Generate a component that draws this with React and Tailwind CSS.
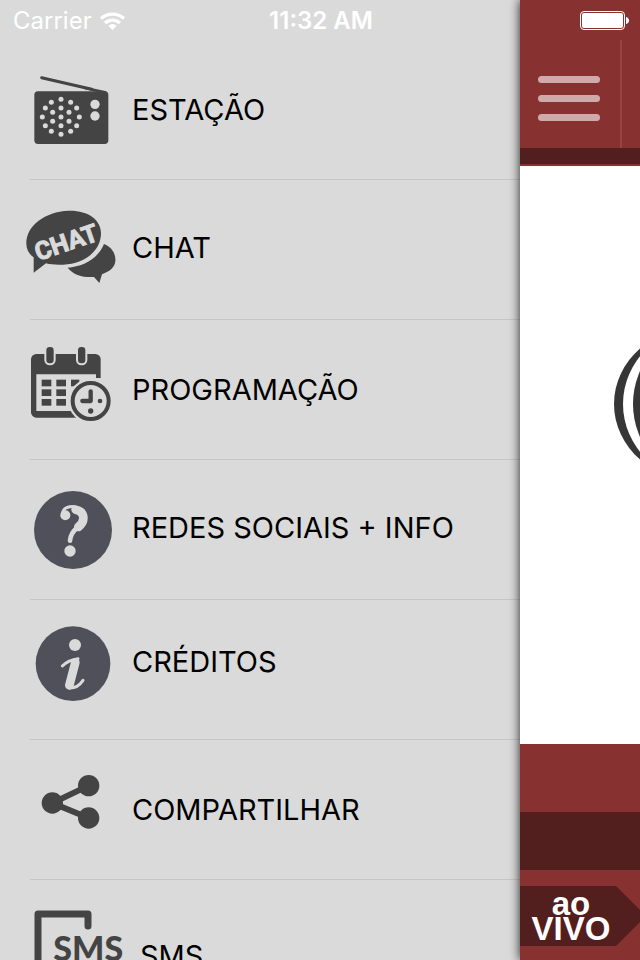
const DARK = '#444444';
const PAPER = '#dadada';

const speakerDots = [
  [123, 118], [94, 127], [152, 127], [76, 144], [123, 144], [170, 144],
  [98, 157], [147, 157], [67, 171], [123, 171], [178, 171], [98, 184],
  [147, 184], [76, 197], [123, 197], [170, 197], [94, 214], [152, 214], [123, 223],
];

function Icon({ viewBox, children }) {
  return (
    <svg className="h-[100px] w-[100px] shrink-0" viewBox={viewBox} aria-hidden="true">
      {children}
    </svg>
  );
}

function RadioIcon() {
  return (
    <Icon viewBox="12 0 300 300">
      <path d="M65 53 L215 88" stroke={DARK} strokeWidth="9" strokeLinecap="round" />
      <path d="M195 84 L255 97" stroke={DARK} strokeWidth="8" strokeLinecap="round" />
      <rect x="43" y="94" width="222" height="158" rx="11" fill={DARK} />
      {speakerDots.map(([x, y]) => (
        <circle key={`${x}-${y}`} cx={x} cy={y} r="7.500" fill={PAPER} />
      ))}
      <circle cx="225" cy="133" r="14" fill={PAPER} />
      <circle cx="225" cy="168" r="14" fill={PAPER} />
    </Icon>
  );
}

function ChatIcon() {
  return (
    <Icon viewBox="12 0 300 300">
      <path
        d="M252 132 C277 142 288 163 286 184 C284 202 270 214 246 223 L238 249 L222 231 C190 233 160 225 143 203 C190 200 235 175 252 132 Z"
        fill={DARK}
      />
      <path
        d="M145 32 C202 30 243 58 243 100 C243 152 195 191 130 194 C110 195 92 194 78 190 L41 218 L41 172 C26 162 19 148 19 130 C19 76 76 35 145 32 Z"
        fill={DARK}
      />
      <text
        x="55"
        y="183"
        transform="rotate(-19 55 183)"
        fill={PAPER}
        stroke={PAPER}
        strokeWidth="3"
        fontSize="75"
        className="font-[Roboto,sans-serif] font-bold"
      >
        CHAT
      </text>
    </Icon>
  );
}

function CalendarIcon() {
  return (
    <Icon viewBox="12 15 300 300">
      <rect x="33" y="57" width="209" height="191" rx="16" fill={DARK} />
      <path d="M49 118 H228 V228 H49 Z" fill={PAPER} />
      <rect x="225" y="129" width="30" height="120" fill={PAPER} />
      {[78, 173].map((x) => (
        <rect key={x} x={x - 2} y="33" width="28" height="55" rx="13" fill={DARK} stroke={PAPER} strokeWidth="6" />
      ))}
      {[134, 163, 192].map((y) => (
        <g key={y} fill={DARK}>
          <rect x="65" y={y} width="29" height="20" />
          <rect x="109" y={y} width="29" height="20" />
        </g>
      ))}
      <rect x="153" y="134" width="25" height="20" fill={DARK} />
      <circle cx="212" cy="198" r="67" fill={PAPER} />
      <circle cx="212" cy="198" r="54" fill="none" stroke={DARK} strokeWidth="12" />
      <path d="M212 169 V198 H187" fill="none" stroke={DARK} strokeWidth="13" strokeLinecap="round" strokeLinejoin="round" />
      <circle cx="240" cy="198" r="7" fill={DARK} />
      <circle cx="212" cy="228" r="8" fill={DARK} />
    </Icon>
  );
}

function HelpIcon() {
  return (
    <Icon viewBox="12 15 300 300">
      <circle cx="159" cy="165" r="117" fill="#50505a" />
      <g fill="none" stroke={PAPER} strokeLinecap="round">
        <path d="M127 115 C130 99 145 94 164 95" strokeWidth="9" />
        <path d="M167 104 C194 109 198 138 175 156" strokeWidth="26" />
        <path d="M172 158 C157 170 151 182 150 197" strokeWidth="14" />
      </g>
      <circle cx="136" cy="121" r="15" fill={PAPER} />
      <circle cx="150" cy="228" r="17" fill={PAPER} />
    </Icon>
  );
}

function InfoIcon() {
  return (
    <Icon viewBox="12 30 300 300">
      <circle cx="159" cy="161" r="112" fill="#50505a" />
      <circle cx="165" cy="105" r="18" fill={PAPER} />
      <g fill="none" stroke={PAPER} strokeLinecap="round">
        <path d="M127 168 C138 156 150 150 174 146" strokeWidth="9" />
        <path d="M166 157 L148 226" strokeWidth="26" />
        <path d="M150 234 C168 234 181 223 189 211" strokeWidth="9" />
      </g>
    </Icon>
  );
}

function ShareIcon() {
  return (
    <Icon viewBox="12 0 300 300">
      <path d="M206 77 L97 129 L206 174" fill="none" stroke={DARK} strokeWidth="18" />
      <circle cx="206" cy="77" r="32" fill={DARK} />
      <circle cx="97" cy="129" r="32" fill={DARK} />
      <circle cx="206" cy="174" r="32" fill={DARK} />
    </Icon>
  );
}

function SmsIcon() {
  return (
    <Icon viewBox="12 90 300 300">
      <path
        d="M204 168 V132 H54 V345 H204 V310"
        fill="none"
        stroke={DARK}
        strokeWidth="21"
        strokeLinecap="round"
        strokeLinejoin="round"
      />
      <text x="100" y="274" fill={DARK} fontSize="102" className="font-[Lato,sans-serif] font-black">
        SMS
      </text>
    </Icon>
  );
}

const items = [
  { label: 'ESTAÇÃO', icon: RadioIcon, labelClass: 'ml-2' },
  { label: 'CHAT', icon: ChatIcon, labelClass: 'ml-2 pb-1' },
  { label: 'PROGRAMAÇÃO', icon: CalendarIcon, labelClass: 'ml-2' },
  { label: 'REDES SOCIAIS + INFO', icon: HelpIcon, labelClass: 'ml-2 pb-1' },
  { label: 'CRÉDITOS', icon: InfoIcon, labelClass: 'ml-2 pb-4' },
  { label: 'COMPARTILHAR', icon: ShareIcon, labelClass: 'ml-2' },
  { label: 'SMS', icon: SmsIcon, labelClass: 'ml-4 pt-3' },
];

function StatusBar() {
  return (
    <header className="pointer-events-none absolute inset-x-0 top-0 z-20 grid h-[41px] grid-cols-3 items-center pr-[11px] pl-[13px] text-2xl text-white">
      <div className="flex items-center gap-2">
        <span>Carrier</span>
        <svg className="h-[18px] w-[25px]" viewBox="0 0 75 54" aria-label="Wi-Fi">
          <g fill="none" stroke="#fff" strokeWidth="10">
            <path d="M3 20 A50 50 0 0 1 72 20" />
            <path d="M15 33 A33 33 0 0 1 60 33" />
          </g>
          <path d="M25 41 A18 18 0 0 1 50 41 L37.500 54 Z" fill="#fff" />
        </svg>
      </div>
      <span className="text-center font-semibold whitespace-nowrap">11:32 AM</span>
      <svg className="h-[19px] w-[49px] justify-self-end" viewBox="0 0 49 19" aria-label="Battery">
        <rect x="0.500" y="0.500" width="44" height="18" rx="3.500" fill="none" stroke="#fff" />
        <rect x="2" y="2" width="41" height="15" rx="2" fill="#fff" />
        <path d="M46 6 Q49 7 49 9.500 Q49 12 46 13 Z" fill="#fff" />
      </svg>
    </header>
  );
}

function Menu() {
  return (
    <nav className="min-w-0 flex-1 overflow-hidden pt-10">
      <ul>
        {items.map(({ label, icon: ItemIcon, labelClass }) => (
          <li key={label}>
            <a href="#" className="flex h-[139px] items-center pl-6 text-[29px] text-black">
              <ItemIcon />
              <span className={`whitespace-nowrap ${labelClass}`}>{label}</span>
            </a>
            <div className="ml-[30px] h-px bg-[#c6c6ca]" />
          </li>
        ))}
      </ul>
    </nav>
  );
}

function Player() {
  return (
    <main className="relative z-10 flex w-[120px] shrink-0 flex-col bg-[#883131] shadow-[0_0_10px_rgba(0,0,0,0.85)]">
      <div className="flex h-[148px] justify-between pt-10">
        <button type="button" aria-label="Menu" className="flex flex-1 flex-col gap-3 pt-9 pl-[18px]">
          <span className="h-[7px] w-[62px] rounded-full bg-[#d0aaaa]" />
          <span className="h-[7px] w-[62px] rounded-full bg-[#d0aaaa]" />
          <span className="h-[7px] w-[62px] rounded-full bg-[#d0aaaa]" />
        </button>
        <div className="mr-[18px] w-0.5 bg-[#984343]" />
      </div>
      <div className="mb-0.5 h-4 bg-[#521e1e]" />
      <div className="flex min-h-0 flex-1 overflow-hidden bg-white">
        <svg className="mt-[158px] ml-[94px] h-[160px] w-[180px] shrink-0" viewBox="0 0 180 160" aria-hidden="true">
          <ellipse cx="90" cy="80" rx="90" ry="79" fill="#363637" />
          <ellipse cx="90" cy="80" rx="81" ry="78" fill="#fff" />
          <ellipse cx="90" cy="80" rx="71" ry="76" fill="#363637" />
        </svg>
      </div>
      <div className="h-[68px]" />
      <div className="h-[58px] bg-[#521e1e]" />
      <div className="flex h-[90px] items-start overflow-hidden pt-4">
        <button
          type="button"
          className="flex h-[60px] w-[126px] shrink-0 flex-col items-center justify-center bg-[#521e1e] pr-6 font-['Liberation_Sans',Arial,sans-serif] font-bold text-white [clip-path:polygon(0_0,96px_0,100%_50%,96px_100%,0_100%)]"
        >
          <span className="text-[33px] leading-[25px]">ao</span>
          <span className="text-[33px] leading-[25px]">VIVO</span>
        </button>
      </div>
    </main>
  );
}

export default function App() {
  return (
    <div className="relative flex h-screen overflow-hidden bg-[#dadada] font-[Inter,'Liberation_Sans',sans-serif]">
      <StatusBar />
      <Menu />
      <Player />
    </div>
  );
}
